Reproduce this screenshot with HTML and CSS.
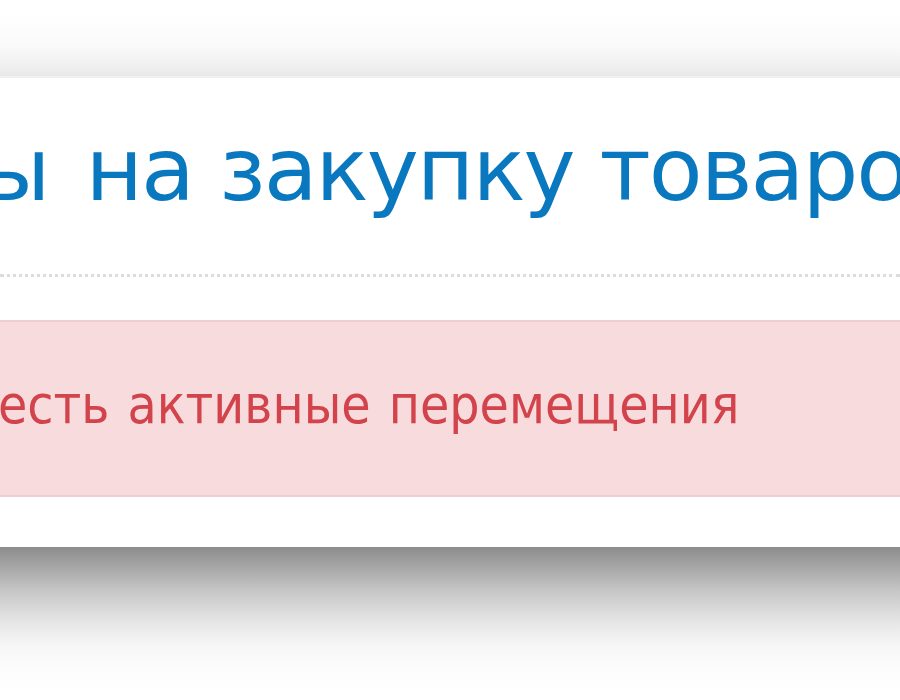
FILE: index.html
```html
<!DOCTYPE html>
<html lang="ru">
<head>
<meta charset="utf-8">
<link rel="stylesheet" href="styles.css">
</head>
<body>
<div class="page">
  <div class="shadow-top"></div>
  <div class="card">
    <h1 class="title"><span class="title-text"><span class="title-first">ы</span> на закупку товаров</span></h1>
    <div class="rule"></div>
    <div class="alert"><span class="alert-text">есть активные перемещения</span></div>
  </div>
  <div class="shadow-bottom"></div>
</div>
</body>
</html>
```
FILE: styles.css
```css
html, body {
  margin: 0;
  padding: 0;
  background: #ffffff;
}
.page {
  width: 900px;
  height: 700px;
  overflow: hidden;
  display: flex;
  flex-direction: column;
  font-family: "DejaVu Sans", Verdana, sans-serif;
}
.shadow-top {
  height: 76px;
  flex: none;
  background: linear-gradient(to bottom, #ffffff 0px, #fefefe 20px, #fafafa 45px, #efefef 68px, #e8e8e8 76px);
  border-bottom: 2px solid #f0f0f0;
}
.card {
  height: 469px;
  flex: none;
  background: #ffffff;
  display: flex;
  flex-direction: column;
  overflow: hidden;
}
.title {
  margin: 0;
  padding-top: 42px;
  height: 150px;
  box-sizing: border-box;
  font-weight: normal;
  font-size: 88px;
  line-height: 100px;
  letter-spacing: -2px;
  word-spacing: 0;
  color: #0a78bf;
  white-space: nowrap;
  overflow: hidden;
}
.title-text {
  display: inline-block;
  margin-left: -19px;
}
.title-first {
  margin-right: 11px;
}
.rule {
  height: 0;
  border-top: 3px dotted #dcdcdc;
  margin-top: 46px;
}
.alert {
  margin-top: 43px;
  height: 177px;
  box-sizing: border-box;
  background: #f7dbdd;
  border-top: 2px solid #f0cdd1;
  border-bottom: 2px solid #f0cdd1;
  display: flex;
  align-items: center;
  white-space: nowrap;
  overflow: hidden;
}
.alert-text {
  font-family: "DejaVu Sans Condensed", "DejaVu Sans", sans-serif;
  font-size: 53px;
  word-spacing: 3px;
  color: #d2434b;
  margin-top: -8px;
  margin-left: -2px;
}
.shadow-bottom {
  flex: 1;
  background: linear-gradient(to bottom, #8c8c8c 0px, #a6a6a6 20px, #c8c8c8 45px, #e6e6e6 75px, #f7f7f7 100px, #fdfdfd 125px, #ffffff 150px);
}
```
